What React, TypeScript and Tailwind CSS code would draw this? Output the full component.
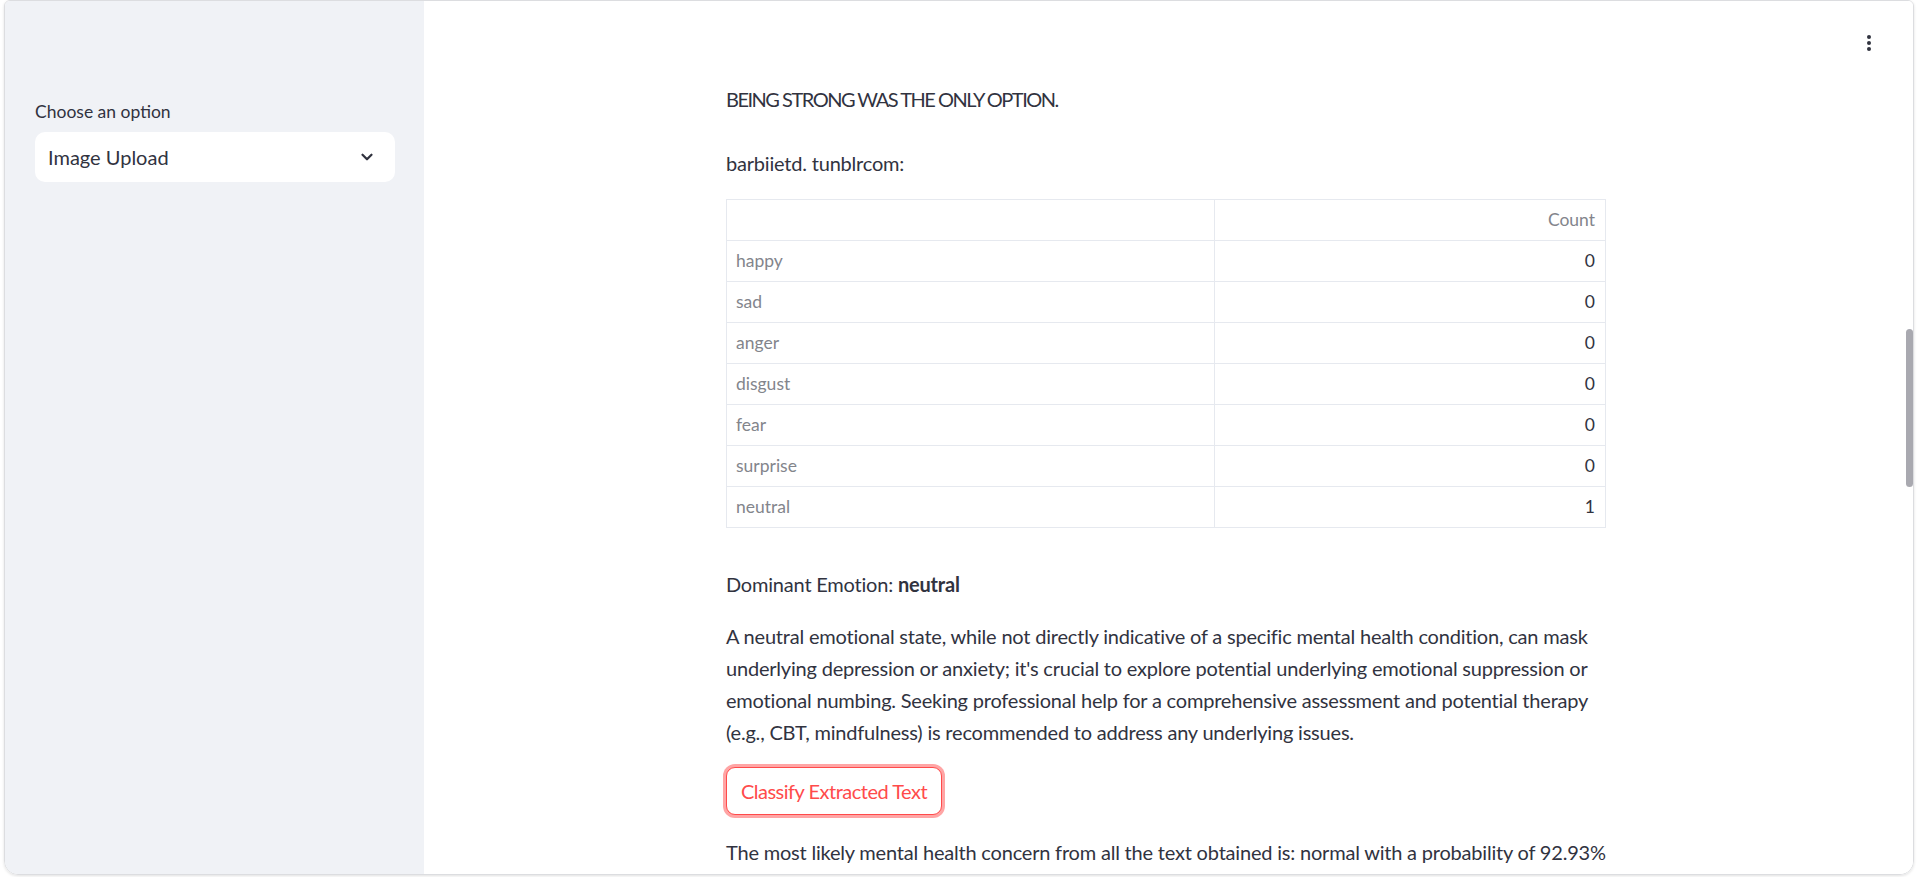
import { ChevronDown } from 'lucide-react';

const emotions: [string, number][] = [
  ['happy', 0],
  ['sad', 0],
  ['anger', 0],
  ['disgust', 0],
  ['fear', 0],
  ['surprise', 0],
  ['neutral', 1],
];

const adviceLines = [
  'A neutral emotional state, while not directly indicative of a specific mental health condition, can mask',
  "underlying depression or anxiety; it's crucial to explore potential underlying emotional suppression or",
  'emotional numbing. Seeking professional help for a comprehensive assessment and potential therapy',
  '(e.g., CBT, mindfulness) is recommended to address any underlying issues.',
];

function Sidebar() {
  return (
    <aside className="w-[419px] shrink-0 bg-[#f0f2f6] px-[30px] pt-[99px]">
      <label className="block text-[17.5px] leading-6 text-[#31333f]">Choose an option</label>
      <div className="mt-[8px] h-[50px] w-[360px] rounded-[10px] bg-white flex items-center justify-between pl-[13px] pr-[19px]">
        <span className="text-[20px] text-[#31333f]">Image Upload</span>
        <ChevronDown className="w-[18px] h-[18px] text-[#31333f]" strokeWidth={3} />
      </div>
    </aside>
  );
}

function EmotionTable() {
  return (
    <table className="w-[880px] border-collapse text-[17.5px]">
      <thead>
        <tr className="h-[41px]">
          <th className="w-[488px] border border-[#e6e9ef]" />
          <th className="border border-[#e6e9ef] pr-[10px] text-right font-normal text-[#83858c]">Count</th>
        </tr>
      </thead>
      <tbody>
        {emotions.map(([name, count]) => (
          <tr key={name} className="h-[41px]">
            <td className="border border-[#e6e9ef] pl-[9px] text-[#83858c]">{name}</td>
            <td className="border border-[#e6e9ef] pr-[10px] text-right text-[#31333f]">{count}</td>
          </tr>
        ))}
      </tbody>
    </table>
  );
}

export default function App() {
  return (
    <div className="h-[877px] w-[1918px] bg-white px-[4px] pb-[2px] font-['Lato',sans-serif] text-[#31333f] overflow-hidden">
      <div className="relative flex h-[875px] overflow-hidden rounded-b-[14px] rounded-t-[6px] border border-[#dcdde0] shadow-[0_1px_3px_rgba(0,0,0,0.12)]">
        <Sidebar />
        <main className="flex-1 bg-white pr-[5px]">
          <div className="mx-auto w-[880px] pt-[82px] text-[20px] leading-[32px] tracking-[-0.2px]">
            <p className="tracking-[-1.5px]">BEING STRONG WAS THE ONLY OPTION.</p>
            <p className="mt-[32px]">barbiietd. tunblrcom:</p>
            <div className="mt-[20px] tracking-normal">
              <EmotionTable />
            </div>
            <p className="mt-[40px]">
              Dominant Emotion: <strong className="font-bold">neutral</strong>
            </p>
            <p className="mt-[20px]">
              {adviceLines.map((line) => (
                <span key={line} className="block whitespace-nowrap">{line}</span>
              ))}
            </p>
            <button className="mt-[19px] h-[48px] w-[216px] whitespace-nowrap rounded-[9px] border border-[#ff4b4b] bg-white text-[20px] tracking-[-0.5px] text-[#ff4b4b] shadow-[0_0_0_3px_rgba(255,75,75,0.5)]">
              Classify Extracted Text
            </button>
            <p className="mt-[21px] whitespace-nowrap">
              The most likely mental health concern from all the text obtained is: normal with a probability of 92.93%
            </p>
          </div>
        </main>
        <div className="absolute right-[42px] top-[34px] flex flex-col gap-[2px]">
          <span className="h-[4px] w-[4px] rounded-full bg-[#31333f]" />
          <span className="h-[4px] w-[4px] rounded-full bg-[#31333f]" />
          <span className="h-[4px] w-[4px] rounded-full bg-[#31333f]" />
        </div>
        <div className="absolute right-0 top-[328px] h-[158px] w-[7px] rounded-full bg-[#a9a9b0]" />
      </div>
    </div>
  );
}
